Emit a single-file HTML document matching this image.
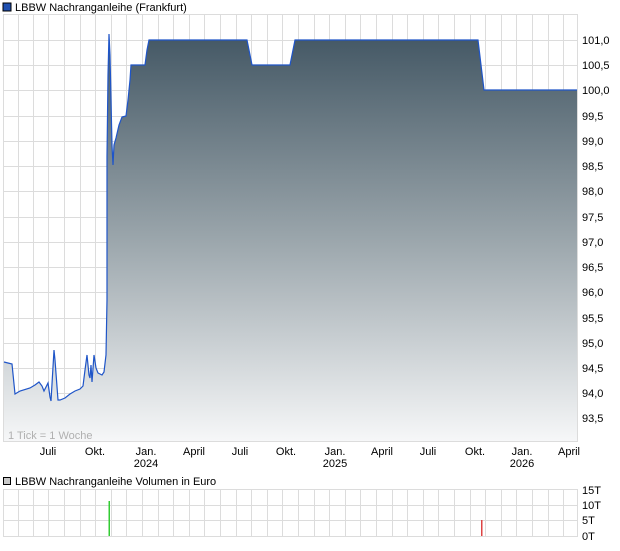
<!DOCTYPE html>
<html><head><meta charset="utf-8"><style>
body{margin:0;background:#fff;width:620px;height:546px;overflow:hidden;font-family:"Liberation Sans",sans-serif}
</style></head><body>
<svg width="620" height="546" xmlns="http://www.w3.org/2000/svg" font-family="Liberation Sans, sans-serif" font-size="11">
<defs>
<linearGradient id="g" gradientUnits="userSpaceOnUse" x1="0" y1="34" x2="0" y2="441">
<stop offset="0" stop-color="#435764"/><stop offset="0.5" stop-color="#9aa5ab"/><stop offset="1" stop-color="#f6f7f8"/>
</linearGradient>
</defs>
<rect x="3" y="3" width="8" height="8" fill="#1f4fb0" stroke="#000" stroke-width="1"/>
<text x="15" y="11">LBBW Nachranganleihe (Frankfurt)</text>
<g stroke="#dcdcdc" stroke-width="1">
<line x1="3" y1="14.5" x2="578" y2="14.5"/>
<line x1="3" y1="40.5" x2="578" y2="40.5"/><line x1="3" y1="65.5" x2="578" y2="65.5"/><line x1="3" y1="90.5" x2="578" y2="90.5"/><line x1="3" y1="116.5" x2="578" y2="116.5"/><line x1="3" y1="141.5" x2="578" y2="141.5"/><line x1="3" y1="166.5" x2="578" y2="166.5"/><line x1="3" y1="191.5" x2="578" y2="191.5"/><line x1="3" y1="217.5" x2="578" y2="217.5"/><line x1="3" y1="242.5" x2="578" y2="242.5"/><line x1="3" y1="267.5" x2="578" y2="267.5"/><line x1="3" y1="292.5" x2="578" y2="292.5"/><line x1="3" y1="318.5" x2="578" y2="318.5"/><line x1="3" y1="343.5" x2="578" y2="343.5"/><line x1="3" y1="368.5" x2="578" y2="368.5"/><line x1="3" y1="393.5" x2="578" y2="393.5"/><line x1="3" y1="418.5" x2="578" y2="418.5"/>
<line x1="3.5" y1="14" x2="3.5" y2="441"/><line x1="18.5" y1="14" x2="18.5" y2="441"/><line x1="33.5" y1="14" x2="33.5" y2="441"/><line x1="48.5" y1="14" x2="48.5" y2="441"/><line x1="64.5" y1="14" x2="64.5" y2="441"/><line x1="80.5" y1="14" x2="80.5" y2="441"/><line x1="95.5" y1="14" x2="95.5" y2="441"/><line x1="111.5" y1="14" x2="111.5" y2="441"/><line x1="126.5" y1="14" x2="126.5" y2="441"/><line x1="142.5" y1="14" x2="142.5" y2="441"/><line x1="158.5" y1="14" x2="158.5" y2="441"/><line x1="173.5" y1="14" x2="173.5" y2="441"/><line x1="189.5" y1="14" x2="189.5" y2="441"/><line x1="204.5" y1="14" x2="204.5" y2="441"/><line x1="220.5" y1="14" x2="220.5" y2="441"/><line x1="236.5" y1="14" x2="236.5" y2="441"/><line x1="251.5" y1="14" x2="251.5" y2="441"/><line x1="267.5" y1="14" x2="267.5" y2="441"/><line x1="282.5" y1="14" x2="282.5" y2="441"/><line x1="298.5" y1="14" x2="298.5" y2="441"/><line x1="314.5" y1="14" x2="314.5" y2="441"/><line x1="329.5" y1="14" x2="329.5" y2="441"/><line x1="345.5" y1="14" x2="345.5" y2="441"/><line x1="360.5" y1="14" x2="360.5" y2="441"/><line x1="376.5" y1="14" x2="376.5" y2="441"/><line x1="392.5" y1="14" x2="392.5" y2="441"/><line x1="407.5" y1="14" x2="407.5" y2="441"/><line x1="423.5" y1="14" x2="423.5" y2="441"/><line x1="438.5" y1="14" x2="438.5" y2="441"/><line x1="454.5" y1="14" x2="454.5" y2="441"/><line x1="470.5" y1="14" x2="470.5" y2="441"/><line x1="485.5" y1="14" x2="485.5" y2="441"/><line x1="501.5" y1="14" x2="501.5" y2="441"/><line x1="516.5" y1="14" x2="516.5" y2="441"/><line x1="532.5" y1="14" x2="532.5" y2="441"/><line x1="548.5" y1="14" x2="548.5" y2="441"/><line x1="563.5" y1="14" x2="563.5" y2="441"/><line x1="577.5" y1="14" x2="577.5" y2="441"/>
<line x1="3" y1="441.5" x2="578" y2="441.5"/>
</g>
<path fill="url(#g)" d="M4,362 L12,364 L15,394 L20,391 L30,388 L35,385 L39,382 L42,386 L44,391 L48,383 L50,397 L51,401 L54,350 L55,360 L58,400 L60,400 L65,398 L70,394 L75,391 L80,389 L83,386 L85,370 L87,355 L89,375 L90,378 L91,365 L92,382 L94,355 L96,368 L98,373 L102,375 L104,372 L106,355 L107,300 L107,156 L108,75 L109,34 L110,55 L111,100 L112,145 L113,165 L114,145 L116,138 L119,125 L122,117 L126,116 L128,100 L130,80 L131,65 L145,65 L147,50 L149,40 L247,40 L252,65 L290,65 L295,40 L478,40 L484,90 L577,90 L577,441 L4,441 Z"/>
<path fill="none" stroke="#1f55c8" stroke-width="1.2" d="M4,362 L12,364 L15,394 L20,391 L30,388 L35,385 L39,382 L42,386 L44,391 L48,383 L50,397 L51,401 L54,350 L55,360 L58,400 L60,400 L65,398 L70,394 L75,391 L80,389 L83,386 L85,370 L87,355 L89,375 L90,378 L91,365 L92,382 L94,355 L96,368 L98,373 L102,375 L104,372 L106,355 L107,300 L107,156 L108,75 L109,34 L110,55 L111,100 L112,145 L113,165 L114,145 L116,138 L119,125 L122,117 L126,116 L128,100 L130,80 L131,65 L145,65 L147,50 L149,40 L247,40 L252,65 L290,65 L295,40 L478,40 L484,90 L577,90"/>
<text x="8" y="439" fill="#b0b0b0">1 Tick = 1 Woche</text>
<g fill="#000">
<text x="582" y="44">101,0</text><text x="582" y="69">100,5</text><text x="582" y="94">100,0</text><text x="582" y="120">99,5</text><text x="582" y="145">99,0</text><text x="582" y="170">98,5</text><text x="582" y="195">98,0</text><text x="582" y="221">97,5</text><text x="582" y="246">97,0</text><text x="582" y="271">96,5</text><text x="582" y="296">96,0</text><text x="582" y="322">95,5</text><text x="582" y="347">95,0</text><text x="582" y="372">94,5</text><text x="582" y="397">94,0</text><text x="582" y="422">93,5</text>
</g>
<g text-anchor="middle">
<text x="48" y="455">Juli</text><text x="95" y="455">Okt.</text><text x="146" y="455">Jan.</text><text x="146" y="467">2024</text><text x="194" y="455">April</text><text x="240" y="455">Juli</text><text x="286" y="455">Okt.</text><text x="335" y="455">Jan.</text><text x="335" y="467">2025</text><text x="382" y="455">April</text><text x="428" y="455">Juli</text><text x="475" y="455">Okt.</text><text x="522" y="455">Jan.</text><text x="522" y="467">2026</text><text x="569" y="455">April</text>
</g>
<rect x="3.5" y="477.5" width="7" height="7" fill="#c8c8c8" stroke="#000"/>
<text x="15" y="485">LBBW Nachranganleihe Volumen in Euro</text>
<g stroke="#dcdcdc">
<line x1="3" y1="489.5" x2="578" y2="489.5"/><line x1="3" y1="505.5" x2="578" y2="505.5"/><line x1="3" y1="520.5" x2="578" y2="520.5"/><line x1="3" y1="536.5" x2="578" y2="536.5"/>
<line x1="3.5" y1="489" x2="3.5" y2="536"/><line x1="18.5" y1="489" x2="18.5" y2="536"/><line x1="33.5" y1="489" x2="33.5" y2="536"/><line x1="48.5" y1="489" x2="48.5" y2="536"/><line x1="64.5" y1="489" x2="64.5" y2="536"/><line x1="80.5" y1="489" x2="80.5" y2="536"/><line x1="95.5" y1="489" x2="95.5" y2="536"/><line x1="111.5" y1="489" x2="111.5" y2="536"/><line x1="126.5" y1="489" x2="126.5" y2="536"/><line x1="142.5" y1="489" x2="142.5" y2="536"/><line x1="158.5" y1="489" x2="158.5" y2="536"/><line x1="173.5" y1="489" x2="173.5" y2="536"/><line x1="189.5" y1="489" x2="189.5" y2="536"/><line x1="204.5" y1="489" x2="204.5" y2="536"/><line x1="220.5" y1="489" x2="220.5" y2="536"/><line x1="236.5" y1="489" x2="236.5" y2="536"/><line x1="251.5" y1="489" x2="251.5" y2="536"/><line x1="267.5" y1="489" x2="267.5" y2="536"/><line x1="282.5" y1="489" x2="282.5" y2="536"/><line x1="298.5" y1="489" x2="298.5" y2="536"/><line x1="314.5" y1="489" x2="314.5" y2="536"/><line x1="329.5" y1="489" x2="329.5" y2="536"/><line x1="345.5" y1="489" x2="345.5" y2="536"/><line x1="360.5" y1="489" x2="360.5" y2="536"/><line x1="376.5" y1="489" x2="376.5" y2="536"/><line x1="392.5" y1="489" x2="392.5" y2="536"/><line x1="407.5" y1="489" x2="407.5" y2="536"/><line x1="423.5" y1="489" x2="423.5" y2="536"/><line x1="438.5" y1="489" x2="438.5" y2="536"/><line x1="454.5" y1="489" x2="454.5" y2="536"/><line x1="470.5" y1="489" x2="470.5" y2="536"/><line x1="485.5" y1="489" x2="485.5" y2="536"/><line x1="501.5" y1="489" x2="501.5" y2="536"/><line x1="516.5" y1="489" x2="516.5" y2="536"/><line x1="532.5" y1="489" x2="532.5" y2="536"/><line x1="548.5" y1="489" x2="548.5" y2="536"/><line x1="563.5" y1="489" x2="563.5" y2="536"/><line x1="577.5" y1="489" x2="577.5" y2="536"/>
</g>
<rect x="108.5" y="501" width="1.5" height="35" fill="#33cc33"/>
<rect x="481" y="520" width="1.5" height="16" fill="#dd4444"/>
<text x="582" y="494">15T</text><text x="582" y="509">10T</text><text x="582" y="524">5T</text><text x="582" y="540">0T</text>
</svg>
</body></html>
